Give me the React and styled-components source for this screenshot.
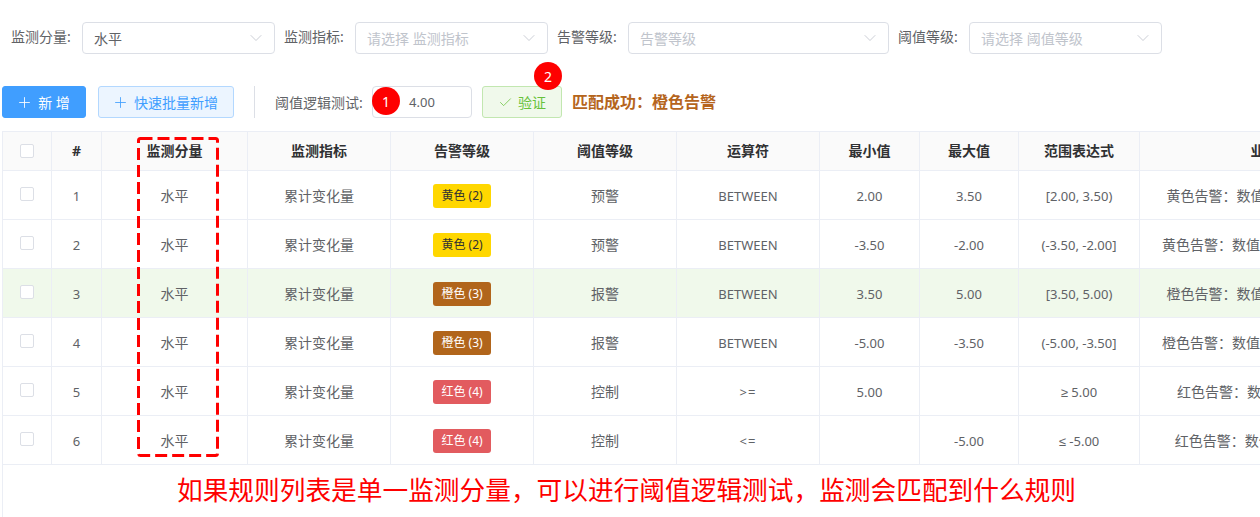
import styled, { createGlobalStyle } from 'styled-components';
import { ChevronDown, Plus, Check } from 'lucide-react';

const FONT = '"Noto Sans", "Noto Sans CJK SC", sans-serif';

const GlobalStyle = createGlobalStyle`
  html, body {
    margin: 0;
    padding: 0;
    background: #fff;
    overflow: hidden;
  }
  body {
    font-family: ${FONT};
    font-size: 14px;
    color: #606266;
  }
`;

const Page = styled.div`
  width: 1260px;
  height: 517px;
  overflow: hidden;
  display: flex;
  flex-direction: column;
`;

const FilterBar = styled.div`
  display: flex;
  align-items: center;
  height: 32px;
  padding: 22px 0 0 11px;
`;

const FilterLabel = styled.label`
  flex: none;
  width: 59px;
  margin: -4px 12px 0 0;
  font-size: 14px;
  color: #606266;
  white-space: nowrap;
`;

const SelectBox = styled.div`
  box-sizing: border-box;
  width: ${props => props.$width}px;
  height: 32px;
  margin-right: 9px;
  padding: 0 11px;
  display: flex;
  align-items: center;
  justify-content: space-between;
  border: 1px solid #dcdfe6;
  border-radius: 4px;
  font-size: 14px;
  color: ${props => (props.$placeholder ? '#c0c4cc' : '#606266')};
  svg {
    color: #c0c4cc;
    margin-right: -3px;
  }
`;

const Toolbar = styled.div`
  display: flex;
  align-items: center;
  height: 32px;
  margin-top: 32px;
  padding-left: 2px;
`;

const ToolButton = styled.button`
  box-sizing: border-box;
  width: ${props => props.$width}px;
  height: 32px;
  margin-left: ${props => props.$left || 0}px;
  padding: 0 ${props => props.$trim || 0}px 0 0;
  display: flex;
  align-items: center;
  justify-content: center;
  gap: 5px;
  font-family: ${FONT};
  font-size: 14px;
  border-radius: 3px;
  border: 1px solid ${props => props.$border};
  background: ${props => props.$bg};
  color: ${props => props.$color};
`;

const Divider = styled.div`
  width: 1px;
  height: 32px;
  margin: 0 20px;
  background: #dcdfe6;
`;

const TestLabel = styled.span`
  flex: none;
  width: 87px;
  margin-right: 10px;
  font-size: 14px;
  color: #606266;
  white-space: nowrap;
`;

const NumberBox = styled.div`
  box-sizing: border-box;
  position: relative;
  width: 100px;
  height: 32px;
  margin-right: 10px;
  display: flex;
  align-items: center;
  justify-content: center;
  border: 1px solid #dcdfe6;
  border-radius: 4px;
  font-size: 13px;
  color: #606266;
`;

const VerifyWrap = styled.div`
  position: relative;
  margin-right: 10px;
`;

const StepBadge = styled.span`
  position: absolute;
  left: ${props => props.$left}px;
  top: ${props => props.$top}px;
  width: 28px;
  height: 28px;
  border-radius: 50%;
  background: #fe0000;
  color: #fff;
  font-size: 14px;
  display: flex;
  align-items: center;
  justify-content: center;
`;

const MatchResult = styled.span`
  margin-top: -3px;
  font-size: 16px;
  font-weight: 700;
  color: #b5651d;
  white-space: nowrap;
`;

const TableArea = styled.div`
  position: relative;
  margin: 13px 0 0 2px;
  flex: none;
  width: 1258px;
  overflow: hidden;
`;

const RulesTable = styled.table`
  table-layout: fixed;
  width: 1415px;
  border-collapse: collapse;
  font-size: 14px;
  color: #606266;
  th, td {
    border: 1px solid #ebeef5;
    padding: 0;
    text-align: center;
    white-space: nowrap;
    overflow: hidden;
  }
  th {
    height: 38px;
    background: #fafafa;
    color: #303133;
    font-weight: 700;
    line-height: 36px;
  }
  td {
    height: 48px;
  }
`;

const Row = styled.tr`
  background: ${props => (props.$active ? '#f0f9eb' : '#fff')};
`;

const ValueCell = styled.td`
  font-size: 13px;
  line-height: 20px;
`;

const ValueText = styled.span`
  position: relative;
  top: 1px;
  letter-spacing: ${props => (props.$wide ? '1px' : 'normal')};
`;

const Sign = styled.span`
  font-family: "Liberation Sans", sans-serif;
`;

const Tick = styled.span`
  display: inline-block;
  box-sizing: border-box;
  width: 14px;
  height: 14px;
  border: 1px solid #dcdfe6;
  border-radius: 2px;
  background: #fff;
  vertical-align: middle;
  position: relative;
  top: ${props => props.$top || 0}px;
`;

const LevelTag = styled.span`
  display: inline-block;
  width: 58px;
  height: 24px;
  line-height: 24px;
  border-radius: 3px;
  font-size: 12px;
  position: relative;
  top: 1px;
  background: ${props => props.$bg};
  color: ${props => props.$color};
`;

const ColumnMark = styled.svg`
  position: absolute;
  left: 135px;
  top: 6px;
  pointer-events: none;
`;

const NoteArea = styled.div`
  flex: 1;
  margin-left: 2px;
  border-left: 1px solid #ebeef5;
  padding: 7px 0 0 174px;
  font-size: 25.7px;
  line-height: 38px;
  color: #fe0000;
  white-space: nowrap;
`;

const COLUMNS = [49, 50, 146, 143, 143, 143, 143, 100, 99, 121, 278];
const HEADERS = ['', '#', '监测分量', '监测指标', '告警等级', '阈值等级', '运算符', '最小值', '最大值', '范围表达式', '业务含义'];

const LEVELS = {
  yellow: { bg: '#ffd700', color: '#303133', text: '黄色 (2)' },
  orange: { bg: '#b1651b', color: '#fff', text: '橙色 (3)' },
  red: { bg: '#e25b5f', color: '#fff', text: '红色 (4)' },
};

const RULES = [
  { id: 1, level: 'yellow', grade: '预警', op: 'BETWEEN', min: '2.00', max: '3.50', range: '[2.00, 3.50)', desc: '黄色告警：数值在 2.00 至 3.50 之间' },
  { id: 2, level: 'yellow', grade: '预警', op: 'BETWEEN', min: '-3.50', max: '-2.00', range: '(-3.50, -2.00]', desc: '黄色告警：数值在 -3.50 至 -2.00 之间' },
  { id: 3, level: 'orange', grade: '报警', op: 'BETWEEN', min: '3.50', max: '5.00', range: '[3.50, 5.00)', desc: '橙色告警：数值在 3.50 至 5.00 之间', active: true },
  { id: 4, level: 'orange', grade: '报警', op: 'BETWEEN', min: '-5.00', max: '-3.50', range: '(-5.00, -3.50]', desc: '橙色告警：数值在 -5.00 至 -3.50 之间' },
  { id: 5, level: 'red', grade: '控制', op: '>=', min: '5.00', max: '', sign: '≥', range: ' 5.00', desc: '红色告警：数值大于等于 5.00 时' },
  { id: 6, level: 'red', grade: '控制', op: '<=', min: '', max: '-5.00', sign: '≤', range: ' -5.00', desc: '红色告警：数值小于等于 -5.00 时' },
];

const Filter = ({ label, value, placeholder, width }) => (
  <>
    <FilterLabel>{label}</FilterLabel>
    <SelectBox $width={width} $placeholder={!value}>
      <span>{value || placeholder}</span>
      <ChevronDown size={20} strokeWidth={1} />
    </SelectBox>
  </>
);

export default function App() {
  return (
    <Page>
      <GlobalStyle />
      <FilterBar>
        <Filter label="监测分量:" value="水平" width={193} />
        <Filter label="监测指标:" placeholder="请选择 监测指标" width={193} />
        <Filter label="告警等级:" placeholder="告警等级" width={261} />
        <Filter label="阈值等级:" placeholder="请选择 阈值等级" width={193} />
      </FilterBar>

      <Toolbar>
        <ToolButton $width={84} $trim={2} $bg="#409eff" $border="#409eff" $color="#fff">
          <Plus size={17} strokeWidth={1.2} />
          新 增
        </ToolButton>
        <ToolButton $width={136} $trim={2} $left={12} $bg="#ecf5ff" $border="#b3d8ff" $color="#409eff">
          <Plus size={17} strokeWidth={1.2} />
          快速批量新增
        </ToolButton>
        <Divider />
        <TestLabel>阈值逻辑测试:</TestLabel>
        <NumberBox>
          4.00
          <StepBadge $left={-1} $top={0}>1</StepBadge>
        </NumberBox>
        <VerifyWrap>
          <ToolButton $width={80} $bg="#f0f9eb" $border="#c2e7b0" $color="#67c23a">
            <Check size={15} strokeWidth={1.2} />
            验证
          </ToolButton>
          <StepBadge $left={52} $top={-24}>2</StepBadge>
        </VerifyWrap>
        <MatchResult>匹配成功：橙色告警</MatchResult>
      </Toolbar>

      <TableArea>
        <RulesTable>
          <colgroup>
            {COLUMNS.map((w, i) => <col key={i} width={w} />)}
          </colgroup>
          <thead>
            <tr>
              {HEADERS.map((h, i) => (
                <th key={i}>{i === 0 ? <Tick $top={-1} /> : h}</th>
              ))}
            </tr>
          </thead>
          <tbody>
            {RULES.map(rule => (
              <Row key={rule.id} $active={rule.active}>
                <td><Tick $top={-3} /></td>
                <ValueCell><ValueText>{rule.id}</ValueText></ValueCell>
                <td>水平</td>
                <td>累计变化量</td>
                <td>
                  <LevelTag $bg={LEVELS[rule.level].bg} $color={LEVELS[rule.level].color}>
                    {LEVELS[rule.level].text}
                  </LevelTag>
                </td>
                <td>{rule.grade}</td>
                <ValueCell><ValueText $wide={rule.op !== 'BETWEEN'}>{rule.op}</ValueText></ValueCell>
                <ValueCell><ValueText>{rule.min}</ValueText></ValueCell>
                <ValueCell><ValueText>{rule.max}</ValueText></ValueCell>
                <ValueCell>
                  <ValueText>
                    {rule.sign && <Sign>{rule.sign}</Sign>}
                    {rule.range}
                  </ValueText>
                </ValueCell>
                <td>{rule.desc}</td>
              </Row>
            ))}
          </tbody>
        </RulesTable>
        <ColumnMark width="84" height="322">
          <rect x="1.5" y="1.5" width="79" height="317" rx="2" fill="none" stroke="#fe0000" strokeWidth="3" strokeDasharray="12 5" />
        </ColumnMark>
      </TableArea>

      <NoteArea>如果规则列表是单一监测分量，可以进行阈值逻辑测试，监测会匹配到什么规则</NoteArea>
    </Page>
  );
}
